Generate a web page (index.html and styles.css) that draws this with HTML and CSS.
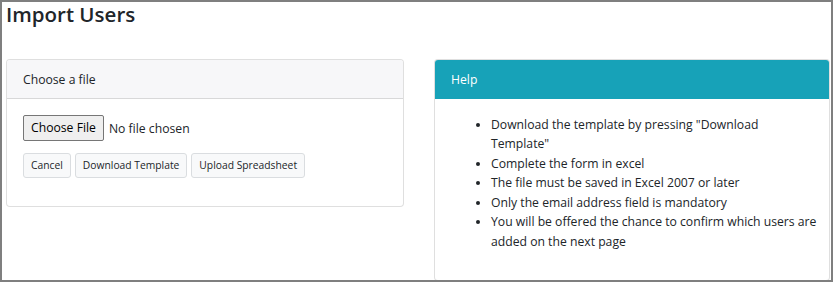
FILE: index.html
```html
<!DOCTYPE html>
<html lang="en">
<head>
    <meta charset="UTF-8">
    <meta name="viewport" content="width=device-width, initial-scale=1.0">
    <title>Import Users</title>
    <link rel="stylesheet" href="styles.css">
</head>
<body>
    <div class="frame">
        <h3 class="page-title">Import Users</h3>

        <div class="row">
            <section class="card">
                <div class="card-header">Choose a file</div>
                <div class="card-body">
                    <form onsubmit="event.preventDefault();">
                        <input type="file" class="file-input" accept=".xlsx">
                        <div class="actions">
                            <button type="button" class="btn">Cancel</button>
                            <button type="button" class="btn">Download Template</button>
                            <button type="submit" class="btn">Upload Spreadsheet</button>
                        </div>
                    </form>
                </div>
            </section>

            <section class="card card-info">
                <div class="card-header">Help</div>
                <div class="card-body">
                    <ul class="help-list">
                        <li>Download the template by pressing "Download Template"</li>
                        <li>Complete the form in excel</li>
                        <li>The file must be saved in Excel 2007 or later</li>
                        <li>Only the email address field is mandatory</li>
                        <li>You will be offered the chance to confirm which users are added on the next page</li>
                    </ul>
                </div>
            </section>
        </div>
    </div>
</body>
</html>
```

FILE: styles.css
```css
body {
    font-family: "Open Sans", "Noto Sans", sans-serif;
    font-size: 12.2px;
    line-height: 19.5px;
    color: #212529;
    background-color: #fff;
    margin: 0;
    padding: 0;
}
.frame {
    height: 282px;
    box-sizing: border-box;
    border: 2px solid #7f7f7f;
    padding: 0 1px 0 4px;
    overflow: hidden;
}
.page-title {
    font-size: 20.5px;
    font-weight: 600;
    line-height: 26px;
    margin: -1px 0 32px 0;
}
.row {
    display: grid;
    grid-template-columns: 398px 1fr;
    column-gap: 30px;
    align-items: start;
}
.card {
    background-color: #fff;
    border: 1px solid rgba(0, 0, 0, 0.125);
    border-radius: 4px;
}
.card-header {
    padding: 10px 16px 8px;
    background-color: #f7f7f9;
    border-bottom: 1px solid rgba(0, 0, 0, 0.125);
    border-radius: 3px 3px 0 0;
}
.card-info .card-header {
    background-color: #17a2b8;
    color: #fff;
    border-bottom-color: #17a2b8;
}
.card-body {
    padding: 16px;
}
.file-input {
    display: block;
    font-family: inherit;
    font-size: 12.2px;
    color: #212529;
    margin-bottom: 12px;
}
.file-input::file-selector-button {
    font-family: inherit;
    font-size: 12.2px;
    height: 26px;
    padding: 0 7px;
    margin-right: 5px;
    background-color: #efefef;
    border: 1px solid #767676;
    border-radius: 2px;
    color: #000;
}
.actions {
    display: flex;
    gap: 4px;
    margin-bottom: 12px;
}
.btn {
    font-family: inherit;
    font-size: 10.3px;
    height: 25px;
    padding: 0 7px;
    color: #212529;
    background-color: #f8f9fa;
    border: 1px solid #dadde0;
    border-radius: 3px;
    cursor: pointer;
}
.help-list {
    margin: 0 -6px 13px 0;
    padding-left: 40px;
}
```
